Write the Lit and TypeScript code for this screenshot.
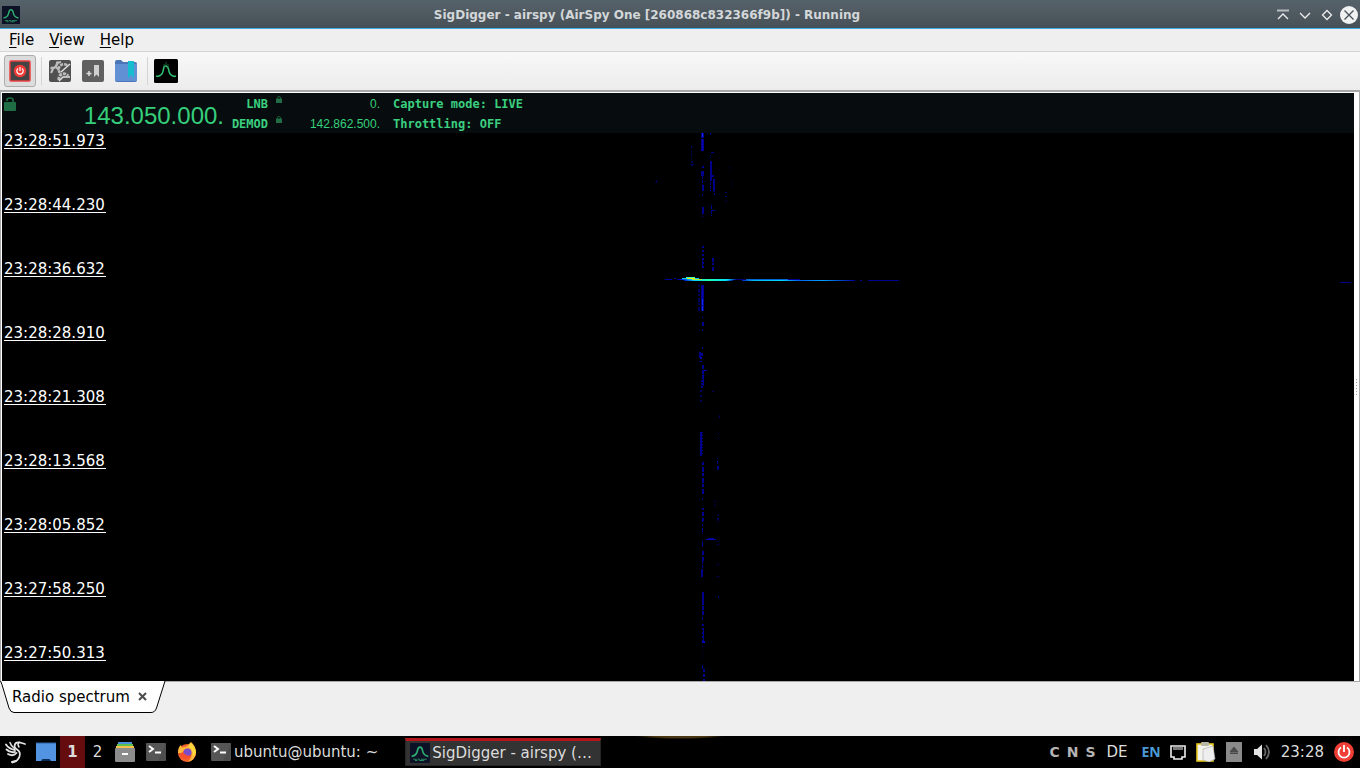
import { LitElement, html, css, svg } from "lit";
import { customElement } from "lit/decorators.js";

type Streak = [x: number, y: number, w: number, h: number, level: number, dash?: string];

/* Vertical carrier traces: position, size, intensity and an optional on/off pattern along time. */
const STREAKS: Streak[] = [
  [701, 133, 3, 5, 1], [702, 133, 1, 4, 3], [701, 139, 3, 12, 1], [702, 139, 1, 12, 2],
  [702, 166, 2, 10, 1, "2 4 3 1"], [701, 171, 3, 5, 1], [702, 176, 1, 10, 1, "3 1"], [702, 185, 2, 6, 1],
  [702, 194, 1, 2, 1], [702, 207, 2, 7, 1], [702, 216, 1, 1, 1],
  [691, 146, 1, 14, 0, "3 2 1 1"], [691, 161, 2, 6, 0, "2 1"], [693, 164, 1, 1, 1],
  [710, 133, 1, 2, 1], [711, 152, 3, 1, 1], [710, 155, 1, 4, 0, "1 1"],
  [710, 161, 2, 20, 1], [711, 175, 3, 2, 1], [713, 179, 2, 12, 1], [710, 182, 1, 9, 1, "3 1"],
  [714, 190, 1, 5, 1, "2 1"], [711, 205, 1, 11, 1, "4 1"], [712, 210, 3, 1, 1],
  [656, 180, 1, 3, 0], [655, 182, 2, 1, 0], [730, 167, 1, 4, 0, "1 2"], [731, 181, 1, 6, 0, "1 4"],
  [725, 192, 2, 12, 0, "1 3 1 4"],
  [702, 246, 2, 22, 1, "2 2"], [702, 258, 1, 10, 1], [712, 258, 2, 13, 1, "4 1 2 2"],
  [698, 285, 2, 26, 0, "2 2 4 1"], [701, 285, 3, 26, 1], [702, 287, 1, 10, 2], [702, 299, 1, 12, 3, "6 1"],
  [702, 316, 1, 3, 0], [702, 322, 2, 4, 1], [702, 329, 1, 2, 1], [702, 347, 1, 2, 1],
  [699, 352, 2, 6, 1], [701, 353, 2, 3, 1], [700, 357, 2, 2, 2], [699, 361, 3, 1, 1],
  [702, 365, 2, 14, 1, "4 1"], [704, 370, 3, 1, 2], [703, 374, 1, 12, 1], [701, 380, 2, 8, 1, "2 1"],
  [700, 390, 2, 14, 0, "2 3"], [712, 391, 2, 1, 0], [719, 415, 1, 3, 0],
  [700, 432, 2, 24, 1], [702, 432, 1, 22, 1, "1 2"], [718, 433, 1, 10, 0, "1 4"],
  [702, 462, 2, 32, 1, "3 2 5 1"], [717, 458, 1, 12, 1, "1 2 3 2"], [717, 466, 2, 3, 1],
  [702, 498, 1, 2, 1], [702, 508, 2, 6, 1, "2 2"], [702, 513, 2, 10, 1, "3 2"], [702, 519, 1, 3, 2],
  [702, 524, 1, 10, 1, "2 2 4 1"], [717, 515, 2, 9, 0, "1 2 2 1"], [714, 501, 2, 6, 0, "1 3"],
  [708, 538, 6, 1, 1], [706, 539, 10, 1, 2], [717, 541, 2, 4, 0, "1 2"],
  [702, 541, 1, 6, 1], [702, 551, 2, 10, 1, "4 2"], [702, 561, 1, 16, 1, "3 1"], [701, 569, 2, 8, 1],
  [717, 564, 2, 16, 0, "1 11"], [718, 596, 1, 2, 1],
  [702, 592, 2, 9, 1], [702, 601, 2, 14, 1, "4 1"], [702, 617, 1, 3, 1],
  [702, 624, 2, 18, 1, "2 2"], [703, 630, 1, 13, 1, "3 1"], [702, 641, 3, 2, 2],
  [702, 646, 1, 16, 0, "1 3"], [702, 665, 1, 4, 1], [703, 669, 2, 12, 1, "3 2"],
  [1340, 282, 11, 1, 1],
];
const LEVELS = ["#00005c", "#00008c", "#0508b4", "#1030f0"];
const TIMES = [
  "23:28:51.973", "23:28:44.230", "23:28:36.632", "23:28:28.910", "23:28:21.308",
  "23:28:13.568", "23:28:05.852", "23:27:58.250", "23:27:50.313",
];

const lock = (open: boolean) => html`<svg class="lock" viewBox="0 0 12 14" aria-hidden="true">
  <path d=${open ? "M3 4V3Q3 1 6 1T9 3V6" : "M3 6V3.5Q3 1 6 1T9 3.5V6"} fill="none" stroke="currentColor" stroke-width="1.6"/>
  <rect y="5" width="12" height="9" rx="1" fill="currentColor"/></svg>`;

const logo = (bg: string, word: boolean) => html`<svg viewBox="0 0 24 24" aria-hidden="true">
  <rect width="24" height="24" rx=${word ? 0 : 1.5} fill=${bg}/>
  ${word
    ? svg`<path d="M2 16Q8 15 9 9Q9.600 5 12 5T15 9Q16 15 22 16" fill="none" stroke="#2fae72" stroke-width="2"/>
       <path d="M4 19.500h4m1 0h3m1 0h7M6 21h3m2 0h6" stroke="#278b61" stroke-width="1.300"/>`
    : svg`<path d="M2 17L4 17.500L6 16.500Q9 15 9.500 10Q10 6.500 12 7T14.500 10Q15 15 18 16.500L20 17.500L22 17" fill="none" stroke="#2fbe72" stroke-width="1.600"/>
       <path d="M10 8V5M12 7V3M14 8V5" stroke="#1d7446" stroke-width=".8"/>`}</svg>`;

const terminal = html`<svg class="wide" viewBox="0 0 20 18" aria-hidden="true"><rect width="20" height="18" rx="1" fill="#4e4e4e"/>
  <path d="M0 0h20L12 18H1z" fill="#5b5b5b" opacity=".6"/><path d="M3 3l4 3-4 3" fill="none" stroke="#fff" stroke-width="2"/><path d="M9 9.500h6" stroke="#fff" stroke-width="2"/></svg>`;

@customElement("water-fall")
class WaterFall extends LitElement {
  static styles = css`
    :host { display: grid; grid-template-rows: minmax(0, 1fr); background: #000; color: #fff; min-height: 0; }
    .plot, .times { grid-area: 1 / 1; }
    .plot { width: 100%; height: 100%; display: block; min-height: 0; }
    .times { list-style: none; margin: 0; padding: 1px 2px 0; font: 15px/14px "DejaVu Sans", sans-serif; }
    .times li { height: 64px; }
    .times time { display: inline-block; border-bottom: 1px solid #fff; padding-right: 1px; }
  `;
  render() {
    return html`<svg class="plot" viewBox="2 133 1352 548" preserveAspectRatio="none" aria-hidden="true">
        <defs>
          <linearGradient id="head"><stop offset="0" stop-color="#0010c0"/><stop offset=".2" stop-color="#00c8ff"/><stop offset=".5" stop-color="#20ffb0"/><stop offset=".85" stop-color="#00e0ff"/><stop offset="1" stop-color="#0010a0"/></linearGradient>
          <linearGradient id="tail"><stop offset="0" stop-color="#0020c0"/><stop offset=".1" stop-color="#00b4f0"/><stop offset=".35" stop-color="#00d8ff"/><stop offset=".5" stop-color="#0060f0"/><stop offset=".72" stop-color="#00a0ff"/><stop offset="1" stop-color="#0000a0"/></linearGradient>
        </defs>
        <g shape-rendering="crispEdges">
          ${STREAKS.map(([x, y, w, h, level, dash]) => dash
            ? svg`<path d="M${x + w / 2} ${y}v${h}" stroke=${LEVELS[level]} stroke-width=${w} stroke-dasharray=${dash}/>`
            : svg`<rect x=${x} y=${y} width=${w} height=${h} fill=${LEVELS[level]}/>`)}
          <path d="M665 279.500h7M674 278.500h2m1 1h3" stroke="#0000a0"/>
          <rect x="680" y="279" width="56" height="1" fill="url(#head)"/>
          <rect x="684" y="280" width="49" height="1" fill="url(#head)"/>
          <path d="M682 278.500h17" stroke="#00c8f8"/>
          <path d="M686 277.500h9" stroke="#40ffb0"/>
          <path d="M687 278.500h8" stroke="#f8f000"/>
          <path d="M692 279.500h10" stroke="#a8f040"/>
          <path d="M736 279.500h9" stroke="#000078"/>
          <rect x="742" y="280" width="113" height="1" fill="url(#tail)"/>
          <path d="M746 279.500h42" stroke="#0068d0"/>
          <path d="M788 279.500h12" stroke="#000090"/>
          <path d="M860 280.500h2M868 280.500h31" stroke="#000090"/>
        </g>
      </svg>
      <ol class="times">${TIMES.map((t) => html`<li><time>${t}</time></li>`)}</ol>`;
  }
}

@customElement("app-root")
class AppRoot extends LitElement {
  static styles = css`
    :host { display: flex; flex-direction: column; height: 100vh; overflow: hidden; background: #efefef; color: #000; font: 15px/20px "DejaVu Sans", sans-serif; }
    * { box-sizing: border-box; }
    button { font: inherit; color: inherit; background: none; border: 0; margin: 0; padding: 0; }
    svg { display: block; flex: none; }
    .title { display: grid; grid-template-columns: 80px 1fr 80px; align-items: center; height: 29px; padding: 2px 2px 0; background: linear-gradient(#56626a, #475057); border-bottom: 1px solid #3daee9; color: #d3d7d9; }
    .title h1 { margin: 0; text-align: center; font: bold 12px/18px "DejaVu Sans", sans-serif; white-space: nowrap; padding-right: 66px; }
    .title > svg { width: 18px; height: 18px; }
    .wm { display: flex; justify-content: flex-end; align-items: center; gap: 4px; }
    .wm button { width: 18px; height: 18px; }
    .wm svg { width: 18px; height: 18px; }
    .menu { display: flex; height: 23px; padding-left: 1px; border-bottom: 1px solid #d4d4d4; }
    .menu button { padding: 0 8px 0 8px; line-height: 22px; margin-right: -1px; }
    .menu u { text-underline-offset: 2px; text-decoration-thickness: 1px; }
    .tools { display: flex; align-items: center; gap: 1px; height: 38px; padding-left: 4px; background: linear-gradient(#f8f8f8, #ececec); }
    .tools button { display: grid; place-items: center; width: 32px; height: 32px; border-radius: 3px; }
    .tools .on { background: #dcdcdc; border: 1px solid #adadad; }
    .tools svg { width: 24px; height: 24px; }
    .rule { width: 1px; height: 28px; background: #d4d4d4; margin: 0 1px 0 4px; }
    .frame { flex: 1; min-height: 0; display: flex; border: 1px solid #a8a8a8; border-top-width: 2px; background: #fff; }
    .view { flex: 1; min-width: 0; display: flex; flex-direction: column; margin: 1px 0 0 1px; overflow: hidden; }
    .grip { width: 5px; display: flex; flex-direction: column; justify-content: center; align-items: center; gap: 2px; }
    .grip i { width: 1px; height: 1px; background: #a0a0a0; }
    .info { display: grid; grid-template: 20px 20px / 222px 44px 22px 90px auto; height: 40px; background: #070d0e; color: #3bcf80; font: bold 12px/22px "DejaVu Sans Mono", monospace; white-space: nowrap; }
    .main { grid-row: span 2; display: flex; justify-content: space-between; padding: 0 0 0 2px; }
    .freq { text-align: right; font: 12px/22px "Liberation Sans", sans-serif; color: #35cf7c; }
    .freq.big { font-size: 24px; line-height: 46px; }
    .lock { color: #1f6e45; width: 12px; height: 14px; margin-top: 4px; }
    .label { text-align: right; }
    .info > .lock { width: 6px; height: 7px; margin: 3px 8px; }
    .status { padding-left: 13px; }
    water-fall { flex: 1; }
    .tabs { height: 54px; }
    .tab { position: relative; display: flex; align-items: center; gap: 7px; width: 166px; height: 32px; padding: 0 12px 1px; margin-top: -1px; }
    .tab > svg { position: absolute; inset: 0; width: 100%; height: 100%; }
    .tab span, .tab button { position: relative; }
    .tab button svg { width: 11px; height: 11px; }
    .bar { display: flex; align-items: center; height: 32px; color: #dcdcdc; background: radial-gradient(ellipse 44px 3px at 50% 0, #4a3612 60%, #000 100%); white-space: nowrap; }
    .bar button { display: flex; align-items: center; height: 32px; flex: none; }
    .bar svg { width: 20px; height: 20px; }
    .launch { padding: 0 6px 0 5px; }
    .bar .menuicon { width: 24px; height: 24px; }
    .bar .wide { height: 18px; }
    .show { padding: 0 4px 0 1px; }
    .desk { width: 25px; justify-content: center; }
    .desk.cur { background: #650c0e; font-weight: bold; }
    .task { gap: 3px; }
    .bar .first { margin-left: 8px; }
    .bar .active { height: 28px; margin-left: 27px; width: 196px; padding: 0 4px 1px 4px; gap: 2px; background: #333; border: 1px solid #262626; border-top: 3px solid #b5161b; }
    .tray { margin-left: auto; display: flex; align-items: center; padding-right: 6px; }
    .leds { display: flex; gap: 7px; font-weight: bold; font-size: 14px; color: #b4b4b4; margin-right: 11px; }
    .lang { margin: 0 7px 0 14px; font: bold 14px/20px "Noto Sans", sans-serif; color: #4a9ad6; }
    .apps { display: flex; gap: 8px; margin-right: 9px; }
    .tray .power { margin-left: 10px; }
  `;

  render() {
    return html`
      <header class="title">
        ${logo("#0d1226", true)}
        <h1>SigDigger - airspy (AirSpy One [260868c832366f9b]) - Running</h1>
        <div class="wm">
          <button aria-label="Keep above"><svg viewBox="0 0 18 18"><path d="M3 4.500h12" stroke="#b8bdc0" stroke-width="2"/><path d="M4 13l5-5 5 5" fill="none" stroke="#eee" stroke-width="1.300"/></svg></button>
          <button aria-label="Minimize"><svg viewBox="0 0 18 18"><path d="M4 7l5 5 5-5" fill="none" stroke="#eee" stroke-width="1.300"/></svg></button>
          <button aria-label="Maximize"><svg viewBox="0 0 18 18"><path d="M9 4.500L13.500 9 9 13.500 4.500 9z" fill="none" stroke="#eee" stroke-width="1.300"/></svg></button>
          <button aria-label="Close"><svg viewBox="0 0 18 18"><circle cx="9" cy="9" r="9" fill="#f0f1f1"/><path d="M4.500 4.500l9 9m0-9l-9 9" stroke="#475057" stroke-width="1.300"/></svg></button>
        </div>
      </header>
      <nav class="menu"><button><u>F</u>ile</button><button><u>V</u>iew</button><button><u>H</u>elp</button></nav>
      <div class="tools" role="toolbar">
        <button class="on" aria-label="Stop capture"><svg viewBox="0 0 24 24"><rect x="2" y="2" width="20" height="20" rx="1" fill="#444" stroke="#e84040" stroke-width="1.500"/><circle cx="12" cy="12" r="6.200" fill="#f03c38"/><path d="M10 9.500a3.200 3.200 0 1 0 4 0M12 8v4" fill="none" stroke="#fff" stroke-width="1.200"/></svg></button>
        <span class="rule"></span>
        <button aria-label="Settings"><svg viewBox="0 0 24 24"><rect x="1" y="1" width="22" height="22" rx="2" fill="#505050"/>
          <g fill="none" stroke="#bdbdbd"><path d="M2.500 9Q9 10 9.500 2.500" stroke-width="2.500"/><path d="M3 14l2-4M13 3l-4 1M11 11L8 8" stroke-width="2.200"/><path d="M12 14a5 5 0 0 1 8-7" stroke-width="2.500" stroke-dasharray="3 1"/><path d="M11 21a5 5 0 0 1 9-4" stroke-width="3" stroke-dasharray="3 1"/><path d="M13 13l9-8M11 22l4-4 7 0" stroke="#e0e0e0" stroke-width="1.500"/></g></svg></button>
        <button aria-label="Add bookmark"><svg viewBox="0 0 24 24"><rect x="1" y="1" width="22" height="22" rx="2" fill="#606060"/><path d="M13 6h5v12l-2.500-2.500L13 18z" fill="#d0d0d0"/><path d="M8 12v5M5.500 14.500h5" stroke="#ddd" stroke-width="1.500"/></svg></button>
        <button aria-label="Bookmarks"><svg viewBox="0 0 24 24"><path d="M1 3Q1 1 3 1h4l2 2h12q2 0 2 2v16q0 2-2 2H3q-2 0-2-2z" fill="#4a76b8"/><path d="M1 5h22v16q0 1-2 1H3q-2 0-2-1z" fill="#6290d4"/><path d="M14 2h6v17l-3-3-3 3z" fill="#18bccf"/></svg></button>
        <span class="rule"></span>
        <button aria-label="SigDigger">${logo("#000", false)}</button>
      </div>
      <main class="frame">
        <div class="view">
          <div class="info">
            <div class="main">${lock(true)}<output class="freq big">143.050.000.</output></div>
            <span class="label">LNB</span>${lock(false)}<output class="freq">0.</output><span class="status">Capture mode: LIVE</span>
            <span class="label">DEMOD</span>${lock(false)}<output class="freq">142.862.500.</output><span class="status">Throttling: OFF</span>
          </div>
          <water-fall></water-fall>
        </div>
        <div class="grip">${[0, 1, 2, 3, 4, 5].map(() => html`<i></i>`)}</div>
      </main>
      <div class="tabs"><div class="tab">
        <svg viewBox="0 0 166 32" aria-hidden="true"><path d="M.5 0Q2 3 3 7L9 27Q10.500 31.500 14 31.500H151Q155 31.500 156.500 27L165 0" fill="#fff" stroke="#000"/></svg>
        <span>Radio spectrum</span>
        <button aria-label="Close tab"><svg viewBox="0 0 11 11"><path d="M2 2l7 7m0-7l-7 7" stroke="#4c4c4c" stroke-width="2"/></svg></button>
      </div></div>
      <footer class="bar">
        <button class="launch" aria-label="Applications"><svg class="menuicon" viewBox="0 0 24 24"><g fill="none" stroke="#e4e4e4" stroke-linecap="round"><path d="M20 4L15 2.500Q10 1.500 9.500 6Q9.500 8 12 9.500Q16 12 14.500 16.500Q13 21 7.500 22.500" stroke-width="1.800"/><path d="M14 2.500Q12 4 14 7" stroke-width="1.500"/><path d="M1 4.500Q4 9 10 10" stroke-width="1.800"/><path d="M5 2.500Q6 6 9.500 8.500" stroke-width="1.500"/><path d="M1.500 9.500Q5 13 10 12" stroke-width="1.800"/><path d="M3 14Q8 17 11.500 13" stroke-width="1.800"/><path d="M7 22l4-1" stroke-width="2"/></g></svg></button>
        <button class="show" aria-label="Show desktop"><svg viewBox="0 0 20 20"><rect y="1" width="20" height="18" fill="#5294e2"/><path d="M0 1h20" stroke="#2b5f9e"/><path d="M5 19l1.500-2h7l1.500 2z" fill="#0b2a50"/></svg></button>
        <button class="desk cur">1</button><button class="desk">2</button>
        <button class="launch" aria-label="Files"><svg viewBox="0 0 20 20"><path d="M3 0h14v3H3z" fill="#4a90d9"/><path d="M2 2h16v3H2z" fill="#5ec04a"/><path d="M1 4h18v3H1z" fill="#f5c04c"/><rect y="6" width="20" height="14" rx="1" fill="#8c8c8c"/><path d="M7 12h6" stroke="#fff" stroke-width="2"/></svg></button>
        <button class="launch" aria-label="Terminal">${terminal}</button>
        <button class="launch" aria-label="Firefox"><svg viewBox="0 0 20 20"><circle cx="10" cy="11" r="9" fill="#f4632a"/><path d="M1 11Q1 5 4 3L5 6Q8 4 9 5L14 0Q19 4 19 11Q18 18 11 20Q17 14 13 7Q8 5 5 11z" fill="#ffb83a"/><path d="M13 1Q18 4 19 10Q18 14 16 15Q17 9 12 5z" fill="#ffd93c"/><circle cx="10.500" cy="10.500" r="4" fill="#7a4ecb"/><path d="M2 12Q5 9 8 12Q10 15 14 13Q12 18 7 17Q3 16 2 12z" fill="#f5502e"/></svg></button>
        <button class="task first">${terminal}ubuntu@ubuntu: ~</button>
        <button class="task active">${logo("#0d1226", true)}SigDigger - airspy (…</button>
        <div class="tray">
          <div class="leds"><span>C</span><span>N</span><span>S</span></div>
          <span>DE</span><span class="lang">EN</span>
          <div class="apps">
            <svg viewBox="0 0 20 20"><path d="M3 4h14v11h-3v2H6v-2H3z" fill="none" stroke="#eee" stroke-width="1.600"/><path d="M6 5v3m2-3v3m2-3v3m2-3v3m2-3v3" stroke="#eee"/></svg>
            <svg viewBox="0 0 20 20"><rect x="1" y="2" width="16" height="17" fill="#f4f4ee" stroke="#e8c820" stroke-width="1.600"/><rect x="5" y="0" width="8" height="4" rx="1" fill="#b8b8a8"/><path d="M7 7l10-3 2 13-6 3-6-2z" fill="#eee" stroke="#aaa" stroke-width=".6"/></svg>
            <svg viewBox="0 0 20 20"><path d="M2 0h16v20H2z" fill="#8a8a8a"/><path d="M10 5l4 5H6zM6 11.500h8" fill="#4a4a4a" stroke="#4a4a4a"/></svg>
            <svg viewBox="0 0 20 20"><path d="M2 7h3l5-4.500v15L5 13H2z" fill="#e4e4e4"/><path d="M12 6q3 4 0 8M14 3q6 7 0 14" fill="none" stroke="#666" stroke-width="1.800"/></svg>
          </div>
          <time>23:28</time>
          <button class="power" aria-label="Log out"><svg viewBox="0 0 20 20"><circle cx="10" cy="10" r="10" fill="#ee3e35"/><path d="M7 5.500a5.500 5.500 0 1 0 6 0M10 3v7" fill="none" stroke="#fff" stroke-width="1.800"/></svg></button>
        </div>
      </footer>`;
  }
}
